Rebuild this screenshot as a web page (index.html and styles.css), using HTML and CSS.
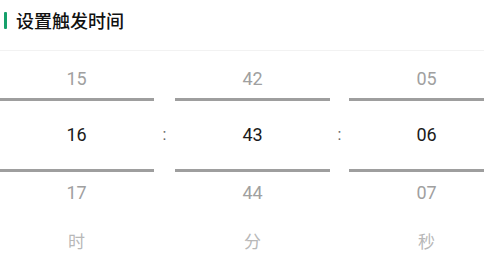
FILE: index.html
```html
<!DOCTYPE html>
<html lang="zh-CN">
<head>
  <meta charset="UTF-8" />
  <meta name="viewport" content="width=device-width, initial-scale=1.0"/>
  <title>设置触发时间</title>
  <link rel="stylesheet" href="styles.css">
</head>
<body>
  <div class="header">
    <span class="bar"></span>
    <h2>设置触发时间</h2>
  </div>

  <div class="picker">
    <div class="column">
      <div class="item prev">15</div>
      <div class="item current">16</div>
      <div class="item next">17</div>
      <div class="unit">时</div>
    </div>
    <div class="colon">:</div>
    <div class="column">
      <div class="item prev">42</div>
      <div class="item current">43</div>
      <div class="item next">44</div>
      <div class="unit">分</div>
    </div>
    <div class="colon">:</div>
    <div class="column">
      <div class="item prev">05</div>
      <div class="item current">06</div>
      <div class="item next">07</div>
      <div class="unit">秒</div>
    </div>
  </div>
</body>
</html>
```

FILE: styles.css
```css
body {
  margin: 0;
  background-color: #fff;
  font-family: Roboto, "Noto Sans CJK SC", sans-serif;
}
.header {
  display: flex;
  align-items: center;
  box-sizing: border-box;
  height: 51px;
  padding-left: 4px;
  padding-bottom: 10px;
  border-bottom: 1px solid #f2f2f2;
}
.bar {
  width: 3px;
  height: 17px;
  background-color: #16a06b;
  border-radius: 1px;
}
h2 {
  margin: 0 0 0 9px;
  font-family: "Noto Sans CJK SC", sans-serif;
  font-size: 18px;
  font-weight: 500;
  color: #111;
}
.picker {
  display: grid;
  grid-template-columns: 155px 21px 155px 19px 155px;
  width: 505px;
  margin-left: -1px;
}
.column {
  display: flex;
  flex-direction: column;
  text-align: center;
}
.item {
  font-size: 18px;
  line-height: 22px;
}
.prev {
  padding-top: 17px;
  height: 30px;
  color: #a0a0a0;
}
.current {
  height: 68px;
  line-height: 68px;
  border-top: 3px solid #9e9e9e;
  border-bottom: 3px solid #9e9e9e;
  color: #1a1a1a;
}
.next {
  padding-top: 10px;
  color: #a0a0a0;
}
.unit {
  margin-top: 26px;
  font-family: "Noto Sans CJK SC", sans-serif;
  font-size: 17px;
  line-height: 22px;
  color: #b8b8b8;
}
.colon {
  padding-top: 47px;
  height: 74px;
  line-height: 74px;
  text-align: center;
  font-size: 16px;
  color: #666;
}
```
